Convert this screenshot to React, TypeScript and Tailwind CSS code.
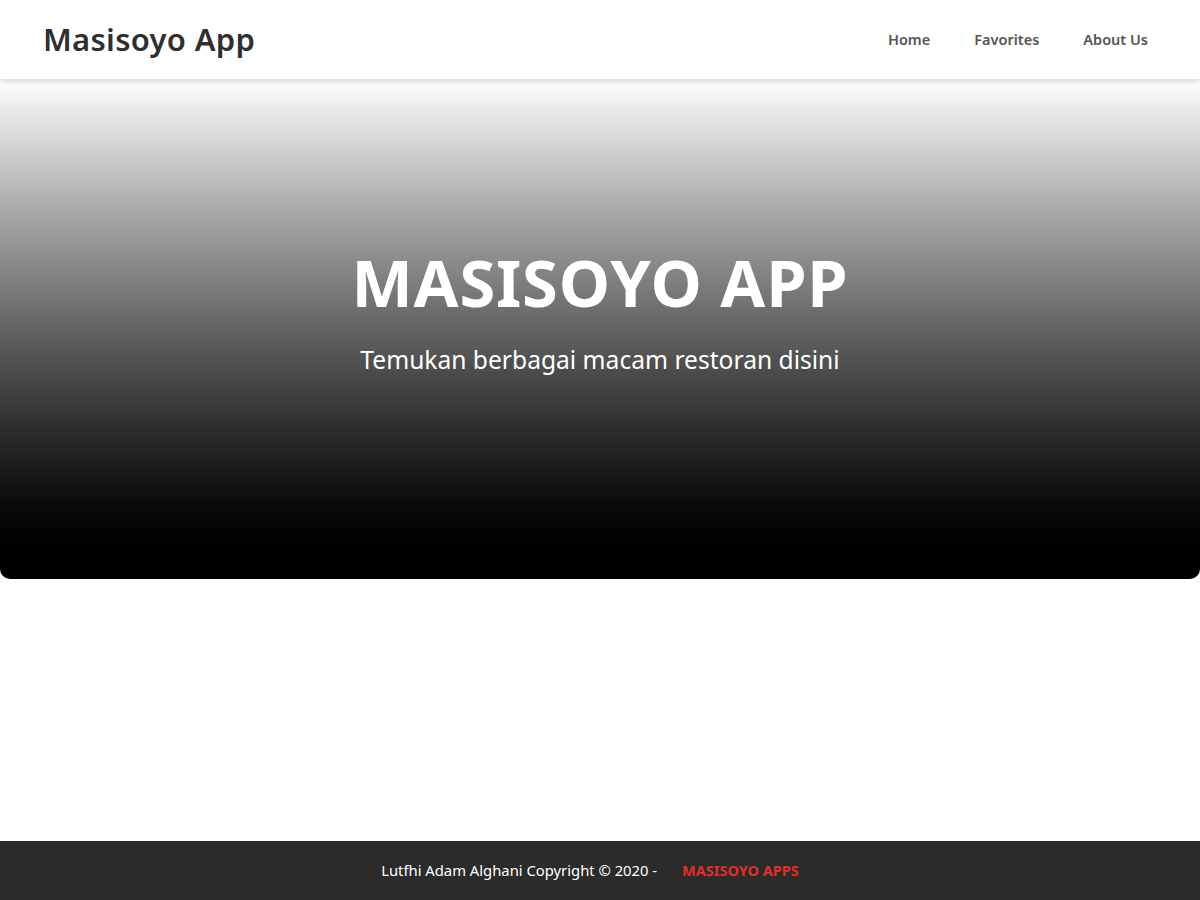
import React from 'react';

const NAV_LINKS = ['Home', 'Favorites', 'About Us'];

export default function App() {
  return (
    <div className="min-h-[900px] flex flex-col bg-white font-['Noto_Sans',sans-serif]">
      {/* Header */}
      <header className="h-[79px] flex items-center justify-between pl-[43px] pr-[30px] bg-white shadow-[0_2px_6px_rgba(0,0,0,0.18)] relative z-10">
        <h1 className="text-[31px] font-semibold text-[#2f2f2f] tracking-[0.3px]">Masisoyo App</h1>
        <nav className="flex">
          {NAV_LINKS.map((link) => (
            <a key={link} href="#" className="px-[22px] text-[14.5px] font-semibold text-[#555]">
              {link}
            </a>
          ))}
        </nav>
      </header>

      {/* Hero */}
      <section className="h-[500px] rounded-b-[10px] bg-gradient-to-b from-white to-black flex flex-col items-center justify-center pb-[30px]">
        <h2 className="text-[65px] leading-none font-bold text-white tracking-[0.8px]">MASISOYO APP</h2>
        <p className="mt-[27px] text-[24.6px] text-white">Temukan berbagai macam restoran disini</p>
      </section>

      <div className="flex-1" />

      {/* Footer */}
      <footer className="h-[59px] bg-[#2b2b2b] flex items-center justify-center gap-[25px] pr-[20px] text-[14.5px]">
        <span className="text-white text-[14.8px]">Lutfhi Adam Alghani Copyright © 2020 -</span>
        <span className="text-[#e52b2b] font-bold">MASISOYO APPS</span>
      </footer>
    </div>
  );
}
